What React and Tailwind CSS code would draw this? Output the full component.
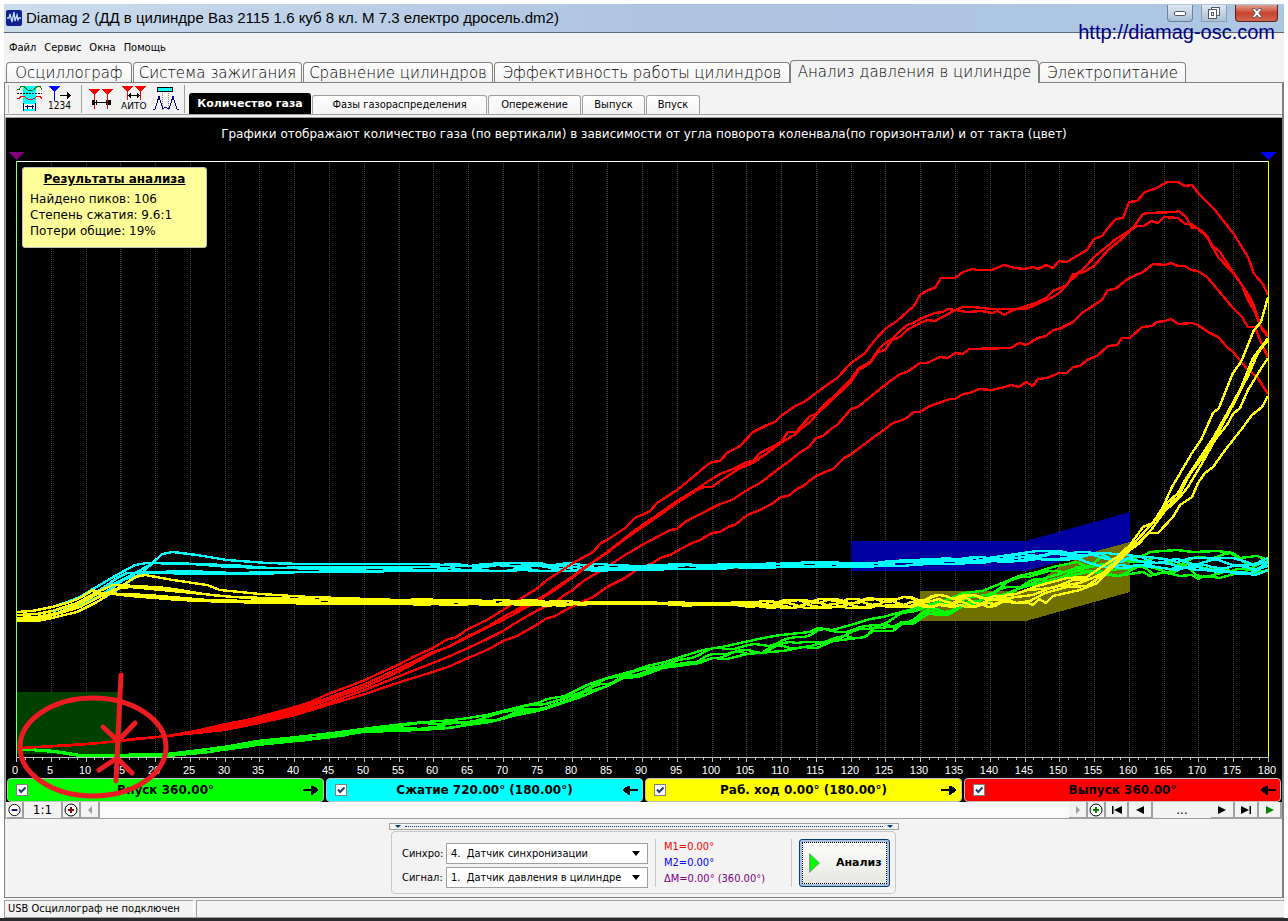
import { useState } from 'react';

const TABS = [
  { name: 'Осциллограф', width: 'w-[126px]' },
  { name: 'Система зажигания', width: 'w-[169px]' },
  { name: 'Сравнение цилиндров', width: 'w-[190px]' },
  { name: 'Эффективность работы цилиндров', width: 'w-[296px]' },
  { name: 'Анализ давления в цилиндре', width: 'w-[249px]' },
  { name: 'Электропитание', width: 'w-[147px]' },
];

const SUB_TABS = [
  { name: 'Количество газа', width: 'w-[122px]' },
  { name: 'Фазы газораспределения', width: 'w-[175px]' },
  { name: 'Опережение', width: 'w-[93px]' },
  { name: 'Выпуск', width: 'w-[63px]' },
  { name: 'Впуск', width: 'w-[54px]' },
];

const STROKES = [
  { name: 'Впуск 360.00°', color: 'bg-[#00ff00]', forward: true },
  { name: 'Сжатие 720.00° (180.00°)', color: 'bg-[#00ffff]', forward: false },
  { name: 'Раб. ход 0.00° (180.00°)', color: 'bg-[#ffff00]', forward: true },
  { name: 'Выпуск 360.00°', color: 'bg-[#ff0000]', forward: false },
];

// chart geometry
const X0 = 16;
const X1 = 1268;
const TOP = 161;
const AXIS = 757;
const degToX = (deg) => Math.round(X0 + ((X1 - X0) * deg) / 180);

const RED = [
  '20,748 40,747 77,745 100,743 133,739 167,736 200,730 225,724 247,720 259,717 295,707 313,701 328,694 347,687 365,680 382,672 400,664 413,657 433,648 448,639 455,638 468,629 487,620 503,610 520,599 538,588 547,580 558,573 573,563 593,552 601,543 607,540 625,528 636,517 642,515 650,511 657,503 677,490 693,477 707,465 712,462 720,461 727,453 740,446 753,432 767,425 775,422 781,416 795,406 802,403 807,400 820,390 827,385 837,378 851,363 865,353 875,340 885,329 897,321 908,311 914,306 920,295 928,290 935,288 941,278 955,278 963,272 972,269 978,270 992,270 1004,265 1015,268 1025,269 1033,267 1038,269 1046,265 1053,268 1059,261 1067,262 1075,257 1087,250 1094,239 1102,236 1108,228 1116,219 1123,218 1129,202 1137,201 1145,192 1157,188 1167,182 1178,182 1185,186 1192,185 1198,193 1215,210 1233,233 1248,257 1254,274 1263,284 1268,295',
  '20,748 100,743 167,736 225,726 259,719 295,709 328,698 365,684 400,668 433,652 448,647 468,636 487,627 503,617 520,608 533,602 547,594 558,586 573,576 582,569 593,562 607,552 625,538 638,528 657,515 677,501 697,489 707,482 720,474 733,469 747,462 753,461 760,453 781,442 788,432 796,432 810,416 816,414 825,404 833,397 851,379 859,368 870,362 878,350 885,343 892,339 900,331 907,325 913,323 920,319 935,313 943,312 948,309 955,310 967,312 982,311 992,313 998,311 1004,315 1011,311 1026,306 1038,302 1046,298 1053,291 1065,286 1087,265 1094,257 1116,239 1129,231 1137,226 1144,226 1151,221 1158,223 1164,217 1178,218 1185,224 1192,224 1198,229 1205,235 1213,246 1220,252 1233,272 1248,294 1254,306 1261,327 1268,335',
  '20,748 100,743 167,736 225,728 259,720 295,711 328,700 365,687 400,671 433,653 448,647 468,637 503,620 533,604 558,588 573,577 593,562 607,553 625,539 638,530 657,517 677,503 697,490 704,487 712,487 720,481 740,468 753,463 767,453 781,443 796,434 802,428 810,422 818,413 833,399 851,382 859,370 870,363 878,352 885,350 892,340 900,337 907,330 920,323 927,320 935,321 948,314 955,310 963,307 973,307 992,309 1011,309 1026,309 1033,306 1046,300 1053,297 1059,293 1067,285 1073,274 1082,273 1094,266 1108,250 1123,238 1135,225 1143,214 1148,213 1175,212 1179,211 1186,217 1192,228 1198,228 1207,236 1213,248 1219,258 1233,273 1242,285 1248,300 1255,312 1261,328 1268,337',
  '20,748 100,743 167,736 225,729 259,722 295,713 328,703 365,690 400,676 420,668 448,657 468,648 487,639 503,631 517,622 538,610 547,606 557,601 563,596 573,590 582,582 600,571 613,563 625,555 642,545 657,537 670,530 677,529 685,522 712,508 720,504 732,500 747,490 760,483 781,467 788,462 802,451 809,447 816,438 823,436 831,429 837,425 851,409 858,407 870,397 885,385 900,374 907,372 920,363 927,363 940,357 948,358 955,353 963,354 969,349 1011,348 1019,343 1026,345 1038,338 1046,336 1053,330 1059,329 1073,322 1082,313 1102,300 1108,290 1115,289 1129,278 1143,272 1153,264 1165,265 1171,263 1178,266 1185,266 1191,270 1198,271 1207,277 1233,308 1242,317 1248,327 1255,327 1262,345 1268,357',
  '20,748 100,743 167,736 225,730 259,723 295,715 328,705 365,694 400,682 420,676 448,667 468,658 487,650 503,641 517,636 538,624 547,618 553,617 573,606 593,597 607,587 625,578 638,569 653,563 660,558 670,555 677,551 692,543 698,541 712,533 720,532 730,526 735,525 747,515 760,510 773,503 781,497 788,496 797,489 803,486 816,476 823,473 833,469 844,458 850,455 870,440 885,429 893,423 905,419 914,412 920,412 930,406 950,399 955,399 963,394 970,393 979,389 992,390 1005,387 1011,385 1019,387 1026,382 1033,386 1038,379 1047,378 1059,373 1067,373 1073,367 1080,366 1087,360 1097,356 1108,346 1117,345 1122,338 1130,338 1142,327 1152,326 1157,322 1165,321 1171,319 1178,324 1192,323 1198,325 1208,332 1218,337 1227,347 1233,352 1248,370 1257,377 1268,394',
];

const GREEN_TOP =
  '20,748 25,749 55,751 80,755 113,755 167,754 200,750 230,746 257,741 287,738 333,733 377,727 413,723 453,720 468,718 487,715 503,711 527,705 538,703 547,699 565,696 573,692 587,685 607,678 633,671 647,666 665,662 677,658 703,650 727,646 740,643 768,637 781,635 810,632 818,628 832,630 851,625 870,619 883,617 920,607 947,600 963,593 982,591 1000,584 1019,576 1037,572 1053,567 1077,562 1087,567 1102,557 1115,562 1128,560 1145,555 1150,552 1177,550 1193,552 1218,551 1233,553 1240,558 1257,556 1268,560';
const GREEN_BOTTOM =
  '20,749 55,752 80,756 113,757 167,756 200,753 230,749 257,745 287,742 333,737 363,732 420,730 450,728 468,725 490,722 517,715 538,711 560,704 578,698 607,686 623,678 638,677 663,668 700,663 712,658 727,659 747,654 783,651 803,647 817,648 833,641 850,639 865,637 873,631 893,631 903,623 913,624 928,614 948,615 963,606 987,602 1020,588 1053,580 1087,572 1117,576 1143,572 1150,576 1163,572 1180,576 1192,575 1198,579 1205,576 1220,578 1237,573 1253,574 1268,570';

const CYAN_TOP =
  '420,564 570,563 640,566 670,563 700,565 820,562 851,563 928,559 1000,556 1037,551 1077,551 1102,553 1129,555 1160,558 1180,558 1233,558 1255,563 1268,557';
const CYAN_BOTTOM =
  '420,571 570,571 640,570 700,569 820,567 851,567 928,565 1000,562 1037,560 1077,560 1102,567 1129,568 1160,567 1180,571 1200,570 1233,573 1255,575 1268,570';
const CYAN = [
  { lead: '17,612 32,611 52,607 67,602 80,597 93,589 115,576 135,565 147,563 180,563 230,567 333,569', t: 0.5, seed: 1 },
  { lead: '17,621 37,621 52,618 77,612 97,602 117,590 143,572 162,554 173,552 197,555 227,560 267,563 303,564', t: 0, seed: 2 },
  { lead: '17,615 37,614 52,611 77,604 100,590 117,578 127,573 187,571 233,573 287,572', t: 0.9, seed: 3 },
  { lead: '17,618 37,617 57,613 80,606 100,596 125,579 147,573 233,574 260,574 300,572', t: 1, seed: 4 },
  { lead: '17,615 37,614 57,610 80,602 100,590 120,581 135,573 153,563 180,564 233,565 267,568 333,567', t: 0.3, seed: 5 },
];

const YELLOW_TOP =
  '420,599 460,600 510,600 550,600 580,602 650,602 720,603 780,600 830,599 850,599 920,597 948,594 1000,596 1018,592';
const YELLOW_BOTTOM =
  '420,605 510,605 550,606 600,604 660,604 690,606 720,605 780,608 850,608 920,607 992,607 1003,602 1018,603';
const YELLOW = [
  {
    lead: '17,612 32,611 52,607 67,603 80,598 93,590 100,593 147,595 207,600 333,603',
    t: 0.2,
    seed: 6,
    tail: '1037,586 1067,578 1087,577 1097,570 1117,557 1130,545 1143,527 1153,523 1163,507 1172,487 1182,470 1192,453 1201,440 1213,413 1219,408 1233,373 1241,362 1254,330 1261,322 1268,297',
  },
  {
    lead: '17,621 37,621 52,618 77,612 97,602 123,585 135,577 145,575 173,580 207,585 220,590 260,594 310,597',
    t: 0.1,
    seed: 7,
    tail: '1028,590 1053,588 1073,580 1090,579 1103,573 1117,560 1130,548 1145,531 1157,518 1165,505 1178,493 1185,480 1197,462 1212,440 1230,408 1241,388 1248,370 1253,358 1268,338',
  },
  {
    lead: '17,615 37,614 52,611 77,603 95,593 113,585 137,586 167,588 210,595 260,599',
    t: 0.5,
    seed: 8,
    tail: '1033,595 1053,587 1080,583 1100,575 1112,567 1130,548 1147,529 1163,510 1178,497 1190,474 1204,456 1214,440 1233,405 1248,376 1258,353 1268,340',
  },
  {
    lead: '17,618 37,617 57,613 80,604 97,594 113,594 130,596 180,600 227,602 333,604',
    t: 0.8,
    seed: 9,
    tail: '1030,601 1045,593 1067,587 1087,586 1100,577 1113,566 1130,550 1148,534 1165,511 1180,497 1188,487 1200,467 1215,440 1227,425 1233,414 1240,408 1248,390 1262,367 1268,358',
  },
  {
    lead: '17,620 37,619 57,614 80,607 97,598 115,589 130,587 193,593 233,597 300,599',
    t: 1,
    seed: 10,
    tail: '1028,603 1033,605 1039,599 1046,603 1053,596 1080,590 1097,583 1110,570 1130,550 1140,543 1148,533 1158,533 1173,517 1180,505 1192,497 1198,483 1205,473 1213,467 1223,453 1233,440 1241,430 1252,415 1262,407 1268,396',
  },
];

const parse = (str) => str.split(' ').map((pair) => pair.split(',').map(Number));

const valueAt = (points, x) => {
  const i = points.findIndex((p) => p[0] >= x);
  if (i === -1) return points[points.length - 1][1];
  if (i === 0) return points[0][1];
  const [ax, ay] = points[i - 1];
  const [bx, by] = points[i];
  return ay + ((by - ay) * (x - ax)) / (bx - ax);
};

// one noisy cycle running between the lower and upper envelope, a sample per degree
const cycle = (top, bottom, t, seed, from, to) => {
  const a = parse(top);
  const b = parse(bottom);
  const out = [];
  for (let x = from; x <= to; x += 7) {
    const noise = 0.18 * Math.sin(x * 0.031 * seed + seed * 2.1) + 0.12 * Math.sin(x * 0.17 + seed * 1.3);
    const k = Math.min(1, Math.max(0, t + noise));
    const y0 = valueAt(a, x);
    out.push(`${x},${Math.round(y0 + (valueAt(b, x) - y0) * k)}`);
  }
  return out.join(' ');
};

const GREEN_LINES = [
  GREEN_TOP,
  GREEN_BOTTOM,
  ...[0.3, 0.7, 0.85].map((t, i) => cycle(GREEN_TOP, GREEN_BOTTOM, t, i + 2, 20, 1268)),
];
const CYAN_LINES = CYAN.map((c) => `${c.lead} ${cycle(CYAN_TOP, CYAN_BOTTOM, c.t, c.seed, 428, 1268)}`);
const YELLOW_LINES = YELLOW.map(
  (c) => `${c.lead} ${cycle(YELLOW_TOP, YELLOW_BOTTOM, c.t, c.seed, 428, 1018)} ${c.tail}`
);

const Lines = ({ lines, color }) => (
  <g fill="none" stroke={color} strokeWidth="2.4" strokeLinejoin="round">
    {lines.map((points, i) => (
      <polyline key={i} points={points} />
    ))}
  </g>
);

const Chart = () => {
  const majors = Array.from({ length: 37 }, (_, i) => i * 5);
  const minors = Array.from({ length: 145 }, (_, i) => i * 1.25);
  return (
    <svg viewBox="6 144 1276 634" className="block w-full" role="img" aria-label="Количество газа">
      <g shapeRendering="crispEdges">
        {majors.slice(1, -1).map((deg) => (
          <line key={deg} x1={degToX(deg) + 0.5} x2={degToX(deg) + 0.5} y1={TOP} y2={AXIS} stroke="#484848" strokeDasharray="1 1" />
        ))}
        <polygon points="17,692 122,692 122,754 17,754" fill="#004000" />
        <polygon points="851,541 1026,541 1130,512 1130,543 1026,571 851,571" fill="#0000a0" />
        <polygon points="920,591 1026,591 1060,566 1097,551 1130,542 1130,592 1026,621 920,621" fill="#707000" />
        <Lines lines={GREEN_LINES} color="#00ff00" />
        <Lines lines={RED.slice(3)} color="#ff0000" />
        <Lines lines={CYAN_LINES} color="#00ffff" />
        <Lines lines={RED.slice(0, 3)} color="#ff0000" />
        <Lines lines={YELLOW_LINES} color="#ffff00" />
        <line x1={X0} x2={X1} y1="161.5" y2="161.5" stroke="#ffffff" />
        <line x1="16.5" x2="16.5" y1={TOP} y2={AXIS} stroke="#80ff80" />
        <line x1="1268.5" x2="1268.5" y1={TOP} y2={AXIS} stroke="#ffff00" />
        <line x1={X0} x2={X1} y1="757.5" y2="757.5" stroke="#c0c0c0" />
        {minors.map((deg) => (
          <line
            key={deg}
            x1={degToX(deg) + 0.5}
            x2={degToX(deg) + 0.5}
            y1={AXIS}
            y2={deg % 5 === 0 ? 762 : 760}
            stroke="#c0c0c0"
          />
        ))}
        <polygon points="8,152 24,152 16,160" fill="#800080" />
        <polygon points="1260,152 1276,152 1268,160" fill="#0000ff" />
      </g>
      {majors.map((deg) => (
        <text key={deg} x={degToX(deg) - 1} y="774" textAnchor="middle" fill="#ffffff" className="font-['Liberation_Sans'] text-[11px]">
          {deg}
        </text>
      ))}
    </svg>
  );
};

const Annotation = () => (
  <svg viewBox="6 118 1276 684" className="pointer-events-none absolute inset-0 h-full w-full" aria-hidden="true">
    <g fill="none" stroke="#ed1c24" strokeWidth="5" strokeLinecap="round" strokeLinejoin="round">
      <ellipse cx="93" cy="747" rx="73" ry="49" />
      <path d="M121 675 L119 715 L117 760 L116 781" />
      <path d="M103 727 L118 741 L135 723" />
      <path d="M99 770 L117 758 L132 773" />
    </g>
  </svg>
);

const StrokeArrow = ({ forward }) => (
  <svg width="16" height="10" viewBox="0 0 16 10" className="shrink-0" shapeRendering="crispEdges">
    <path d={forward ? 'M0 4h8V0.5h2l6 4.5l-6 4.5h-2V6H0z' : 'M16 4H8V0.5H6L0 5l6 4.5h2V6h8z'} fill="#000" />
  </svg>
);

const StrokeBar = ({ stroke }) => {
  const [checked, setChecked] = useState(true);
  return (
    <label className={`flex h-6 flex-1 items-center rounded-sm border border-[#c0c0c0] pr-1 pl-2 ${stroke.color}`}>
      <span className="grid shrink-0">
        <input
          type="checkbox"
          checked={checked}
          onChange={(e) => setChecked(e.target.checked)}
          className="col-start-1 row-start-1 size-3 appearance-none border border-[#808080] bg-white"
        />
        {checked && (
          <svg width="12" height="12" viewBox="0 0 12 12" className="pointer-events-none col-start-1 row-start-1">
            <path d="M3 5.5l2.2 2.5L9.5 3.5" fill="none" stroke="#1c3f73" strokeWidth="2" />
          </svg>
        )}
      </span>
      <span className="flex-1 text-center font-['DejaVu_Sans'] text-[12px] leading-4 font-bold">{stroke.name}</span>
      <StrokeArrow forward={stroke.forward} />
    </label>
  );
};

const Triangle = ({ x, y, color, stem }) => (
  <g fill={color}>
    <polygon points={`${x},${y} ${x + 11},${y} ${x + 6},${y + 6} ${x + 5},${y + 6}`} />
    <rect x={x + 5} y={y + 5} width="1" height={stem} />
  </g>
);

const ToolButton = ({ label, children }) => (
  <button type="button" aria-label={label} className="h-[27px] w-[29px]">
    <svg width="29" height="27" viewBox="0 0 29 27" shapeRendering="crispEdges">
      {children}
    </svg>
  </button>
);

const Toolbar = () => (
  <div className="flex items-start pt-[2px] pl-[3px]">
    <div className="h-7 w-px bg-[#b8b8b8]" />
    <div className="flex gap-[2px] pl-2">
      <ToolButton label="Период">
        <rect x="6" y="1" width="13" height="25" fill="#00ffff" />
        <path d="M0 4.500h2l2-3h3l3 3l2 1h3l2-1l3-3h3l2 3" fill="none" stroke="#008000" />
        <path d="M0 8.500h25" stroke="#000" strokeDasharray="2 1" />
        <path d="M0 13.500h2l2-2h3l3 2l2 1h3l2-1l3-2h3l2 2" fill="none" stroke="#ff0000" />
        <rect x="7" y="19" width="11" height="5" fill="#ffffff" />
        <path d="M6.500 18v8M18.500 18v8M8 21.500h9M10 19.500v4M15 19.500v4" stroke="#000080" />
      </ToolButton>
      <ToolButton label="Нумерация">
        <Triangle x={1} y={1} color="#0000ff" stem={10} />
        <path d="M12 10.500h10" stroke="#000" />
        <path d="M19 7v7l4-3.500z" fill="#000" />
        <text x="0" y="24" className="font-['DejaVu_Sans_Condensed'] text-[10px]">1234</text>
      </ToolButton>
    </div>
    <div className="ml-1 h-7 w-px bg-[#a0a0a0]" />
    <div className="flex gap-[3px] pr-[3px] pl-[6px]">
      <ToolButton label="Маркеры">
        <Triangle x={1} y={4} color="#ff0000" stem={15} />
        <Triangle x={14} y={4} color="#ff0000" stem={15} />
        <path d="M5 17.500h18" stroke="#000" />
        <path d="M4 15h3v5h-3zM20 15h3v5h-3z" fill="#000" />
        <path d="M8.500 15v5M18.500 15v5" stroke="#000" />
      </ToolButton>
      <ToolButton label="Авто">
        <Triangle x={2} y={1} color="#ff0000" stem={9} />
        <Triangle x={15} y={1} color="#ff0000" stem={9} />
        <path d="M8 10.500h12" stroke="#000" />
        <path d="M8 10.500l3-3v6zM20 10.500l-3-3v6z" fill="#000" />
        <text x="1" y="24" className="font-['DejaVu_Sans'] text-[9px]">АИТО</text>
      </ToolButton>
      <ToolButton label="Форма сигнала">
        <rect x="5.500" y="2.500" width="15" height="4" fill="#00ffff" stroke="#000" />
        <path d="M10.500 8v17M16.500 8v17" stroke="#808080" strokeDasharray="1 1" />
        <path d="M1 24h2l2-6l2-7l2 7l2 6l2-2l2 1l2 1l2-6l2-7l2 7l2 6h2" fill="none" stroke="#000080" />
      </ToolButton>
    </div>
    <div className="h-7 w-px bg-[#a0a0a0]" />
  </div>
);

const NavButton = ({ label, width, children }) => (
  <button
    type="button"
    aria-label={label}
    className={`flex h-4 items-center justify-center border-r-2 border-b border-[#a0a0a0] bg-[#f3f3f3] ${width}`}
  >
    <svg width="16" height="14" viewBox="0 0 16 14">
      {children}
    </svg>
  </button>
);

const ZoomGlyph = ({ color, plus }) => (
  <>
    <circle cx="8" cy="7" r="6" fill="#fff" stroke="#000" />
    <path d={plus ? 'M5 7h6M8 4v6' : 'M5 7h6'} stroke={color} strokeWidth="2" />
  </>
);

const Select = ({ id, label, options }) => (
  <div className="flex items-center">
    <label htmlFor={id} className="w-11">{label}</label>
    <div className="relative">
      <select
        id={id}
        className="h-[21px] w-[202px] appearance-none rounded-none border border-[#a0a0a0] bg-white pl-1"
      >
        {options.map((o) => (
          <option key={o}>{o}</option>
        ))}
      </select>
      <svg width="8" height="5" viewBox="0 0 8 5" className="pointer-events-none absolute top-2 right-2">
        <path d="M0 0h8L4 5z" fill="#000" />
      </svg>
    </div>
  </div>
);

const TitleBar = () => (
  <header className="relative flex h-[29px] items-center border-b border-[#5a6a7c] bg-linear-to-r from-[#cbdcee] via-[#aec5e0] to-[#adc6e2] pl-[2px]">
    <svg width="16" height="16" viewBox="0 0 16 16" className="mr-1 shrink-0">
      <rect width="16" height="16" rx="2" fill="#10208c" />
      <path d="M1 8h2l1-4l2 8l2-10l1 9l2-6l1 5l1-2h2" fill="none" stroke="#c0e0ff" strokeWidth="1.300" />
    </svg>
    <h1 className="font-['Liberation_Sans'] text-[15px] whitespace-nowrap">
      Diamag 2 (ДД в цилиндре Ваз 2115 1.6 куб 8 кл. М 7.3 електро дросель.dm2)
    </h1>
    <div className="ml-auto flex gap-2 self-start pt-px pr-[6px]">
      <button type="button" aria-label="Свернуть" className="flex h-[17px] w-[26px] items-center justify-center rounded-b border border-t-0 border-[#70809a] bg-linear-to-b from-[#dfe8f2] to-[#a9bfd6]">
        <svg width="12" height="5" viewBox="0 0 12 5"><rect x=".5" y=".5" width="11" height="4" rx="1" fill="#fff" stroke="#505868" /></svg>
      </button>
      <button type="button" aria-label="Развернуть" className="flex h-[17px] w-[26px] items-center justify-center border border-t-0 border-[#8c9cb2] bg-linear-to-b from-[#dfe8f2] to-[#a9bfd6]">
        <svg width="12" height="12" viewBox="0 0 12 12" fill="#fff" stroke="#505868">
          <rect x="3.500" y=".5" width="8" height="8" />
          <rect x=".5" y="2.500" width="8" height="9" />
          <rect x="3.500" y="5.500" width="2" height="3" />
        </svg>
      </button>
      <button type="button" aria-label="Закрыть" className="flex h-[17px] w-[43px] items-center justify-center rounded-b border border-t-0 border-[#5c2018] bg-linear-to-b from-[#e0a090] via-[#c8402c] to-[#d06850]">
        <svg width="12" height="10" viewBox="0 0 12 10">
          <path d="M1 .5h3l2 2.500l2-2.500h3L7.800 5L11 9.500H8L6 7L4 9.500H1L4.200 5z" fill="#fff" stroke="#505060" strokeWidth=".8" />
        </svg>
      </button>
    </div>
    <a href="http://diamag-osc.com" className="absolute top-4 right-[9px] font-['Liberation_Sans'] text-[20px] leading-6 text-[#000080]">
      http://diamag-osc.com
    </a>
  </header>
);

const App = () => {
  const [tab, setTab] = useState(4);
  const [subTab, setSubTab] = useState(0);

  return (
    <div className="min-h-screen bg-white px-1 pt-1 font-['DejaVu_Sans_Condensed','DejaVu_Sans',sans-serif] text-[11px] leading-4 text-black">
      <div className="bg-[#f3f3f3]">
        <TitleBar />

        {/* Menu */}
        <nav className="flex h-[27px] items-center gap-2 pt-[2px] pl-[5px]">
          {['Файл', 'Сервис', 'Окна', 'Помощь'].map((item) => (
            <button key={item} type="button">{item}</button>
          ))}
        </nav>

        {/* Main tabs */}
        <div role="tablist" className="flex h-[22px] items-end pl-[2px] font-['DejaVu_Sans'] text-[15px] leading-5 font-extralight">
          {TABS.map((t, i) => (
            <button
              key={t.name}
              type="button"
              role="tab"
              aria-selected={tab === i}
              onClick={() => setTab(i)}
              className={`rounded-t border border-b-0 border-[#808080] whitespace-nowrap ${t.width} ${
                tab === i ? 'z-10 -mb-px -ml-px h-[23px] bg-[#f3f3f3]' : 'mr-px h-5 bg-linear-to-b from-white to-[#f3f3f3]'
              }`}
            >
              {t.name}
            </button>
          ))}
        </div>

        <main className="border border-r-2 border-[#808080]">
          {/* Toolbar and sub tabs */}
          <div className="flex h-8 items-start border-b border-[#a0a0a0]">
            <Toolbar />
            <div role="tablist" className="flex items-end gap-px self-end pl-1">
              {SUB_TABS.map((t, i) => (
                <button
                  key={t.name}
                  type="button"
                  role="tab"
                  aria-selected={subTab === i}
                  onClick={() => setSubTab(i)}
                  className={`rounded-t-[3px] border border-b-0 whitespace-nowrap ${t.width} ${
                    subTab === i
                      ? 'h-[21px] border-black bg-black font-[\'DejaVu_Sans\'] font-bold text-white'
                      : 'h-[19px] border-[#a0a0a0] bg-linear-to-b from-white to-[#f3f3f3]'
                  }`}
                >
                  {t.name}
                </button>
              ))}
            </div>
          </div>

          {/* Chart */}
          <div className="mt-[2px] border-t border-l border-[#a0a0a0]">
            <div className="relative bg-black">
              <p className="h-[26px] pt-2 text-center font-['DejaVu_Sans'] text-[12px] leading-4 text-white">
                Графики отображают количество газа (по вертикали) в зависимости от угла поворота коленвала(по горизонтали) и от такта (цвет)
              </p>
              <Chart />
              <div className="flex gap-[2px] px-px">
                {STROKES.map((s) => (
                  <StrokeBar key={s.name} stroke={s} />
                ))}
              </div>
              <section className="absolute top-[49px] left-4 h-[81px] w-[185px] rounded-[3px] border border-[#c0c0c0] bg-[#ffff99] px-[7px] pt-[3px] font-['DejaVu_Sans'] text-[12px] leading-4">
                <h2 className="mb-1 text-center font-bold underline">Результаты анализа</h2>
                <p>Найдено пиков: 106</p>
                <p>Степень сжатия: 9.6:1</p>
                <p>Потери общие: 19%</p>
              </section>
              <Annotation />
            </div>

            {/* Zoom and scroll */}
            <div className="flex h-[17px] border-b border-[#a0a0a0] bg-[#fafafa] pl-px">
              <NavButton label="Уменьшить" width="w-[17px]"><ZoomGlyph color="#000080" /></NavButton>
              <button type="button" className="h-4 w-[39px] border-r-2 border-[#a0a0a0] bg-[#f3f3f3] font-['DejaVu_Sans'] text-[12px]">1:1</button>
              <NavButton label="Увеличить" width="w-[18px]"><ZoomGlyph color="#900000" plus /></NavButton>
              <NavButton label="Прокрутить влево" width="w-[19px]"><path d="M10 3v8L6 7z" fill="#a0a0a0" /></NavButton>
              <div className="flex-1" />
              <NavButton label="Прокрутить вправо" width="w-[19px]"><path d="M6 3v8l4-4z" fill="#a0a0a0" /></NavButton>
              <NavButton label="Добавить" width="w-[18px]"><ZoomGlyph color="#008000" plus /></NavButton>
              <NavButton label="В начало" width="w-[23px]"><path d="M3 3h1.500v8H3zM13 3v8L5 7z" fill="#000" /></NavButton>
              <NavButton label="Назад" width="w-6"><path d="M12 3v8L4 7z" fill="#000" /></NavButton>
              <button type="button" aria-label="Позиция" className="h-4 w-[58px] bg-[#f3f3f3] font-['DejaVu_Sans'] text-[12px]">...</button>
              <NavButton label="Вперёд" width="w-6"><path d="M4 3v8l8-4z" fill="#000" /></NavButton>
              <NavButton label="В конец" width="w-6"><path d="M3 3v8l8-4zM11.500 3H13v8h-1.500z" fill="#000" /></NavButton>
              <NavButton label="Воспроизвести" width="w-[23px]"><path d="M4 3v8l8-4z" fill="#008000" /></NavButton>
            </div>
          </div>

          {/* Analysis controls */}
          <div className="mx-auto flex w-[510px] flex-col items-center pt-1 pb-[3px]">
            <div className="mb-px flex h-[7px] w-full items-center gap-1 border border-[#a0a0a0] px-[5px]">
              <svg width="6" height="3" viewBox="0 0 6 3"><path d="M0 0h6L3 3z" fill="#003c74" /></svg>
              <div className="flex-1 border-t border-dotted border-[#003c74]" />
              <svg width="6" height="3" viewBox="0 0 6 3"><path d="M0 0h6L3 3z" fill="#003c74" /></svg>
            </div>
            <form className="flex h-[63px] w-[505px] items-center rounded border border-[#c8c8c8] pl-[10px]" onSubmit={(e) => e.preventDefault()}>
              <div className="mt-[6px] flex flex-col gap-[3px]">
                <Select id="sync" label="Синхро:" options={['4.\u00a0 Датчик синхронизации']} />
                <Select id="signal" label="Сигнал:" options={['1.\u00a0 Датчик давления в цилиндре']} />
              </div>
              <div className="ml-[7px] h-12 w-32 border-l border-[#c8c8c8] pl-2 whitespace-nowrap">
                <p className="text-[#ff0000]">M1=0.00°</p>
                <p className="text-[#0000ff]">M2=0.00°</p>
                <p className="text-[#800080]">ΔM=0.00° (360.00°)</p>
              </div>
              <div className="ml-2 h-12 border-l border-[#c8c8c8] pl-[7px]">
                <button type="submit" className="flex h-12 w-[91px] items-center rounded-[3px] border border-[#003c74] bg-[#a8c0e0] p-[2px]">
                  <span className="flex h-full w-full items-center gap-4 border border-dotted border-black bg-linear-to-b from-white to-[#e6e6e0] pl-[6px] font-['DejaVu_Sans'] font-bold">
                    <svg width="11" height="20" viewBox="0 0 11 20"><path d="M.5 .5v19L10.500 10z" fill="#00ff00" stroke="#808080" strokeWidth=".7" /></svg>
                    Анализ
                  </span>
                </button>
              </div>
            </form>
          </div>
        </main>

        {/* Status bar */}
        <footer className="flex gap-[2px] border-b border-[#a0a0a0] pt-[2px]">
          <div className="h-[17px] w-[190px] border-t border-l border-r border-[#a0a0a0] border-r-white pl-[3px]">
            USB Осциллограф не подключен
          </div>
          <div className="h-[17px] flex-1 border-t border-l border-[#a0a0a0]" />
        </footer>
      </div>
      <div className="-mx-1 h-[3px] bg-[#2c2c2e]" />
    </div>
  );
};

export default App;
